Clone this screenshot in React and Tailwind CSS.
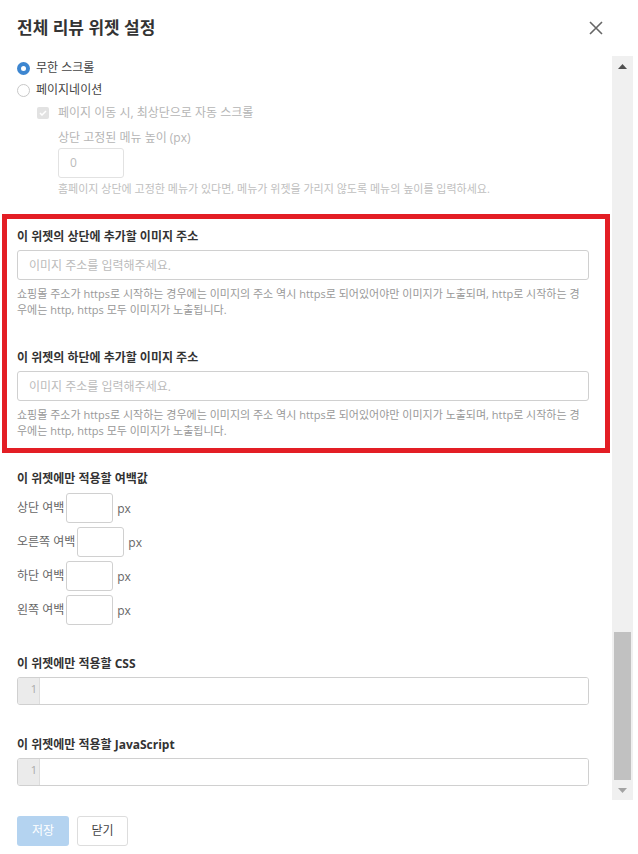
import React from 'react';

const font = { fontFamily: '"Open Sans", "Noto Sans CJK KR", sans-serif' };

const HELP_IMG =
  '쇼핑몰 주소가 https로 시작하는 경우에는 이미지의 주소 역시 https로 되어있어야만 이미지가 노출되며, http로 시작하는 경우에는 http, https 모두 이미지가 노출됩니다.';

const Radio = ({ checked, label }) => (
  <div className="flex h-[22px] items-center">
    {checked ? (
      <span className="flex h-[13px] w-[13px] items-center justify-center rounded-full bg-[#3d86d0]">
        <span className="h-[5px] w-[5px] rounded-full bg-white" />
      </span>
    ) : (
      <span className="h-[13px] w-[13px] rounded-full border border-[#c8c8c8] bg-white" />
    )}
    <span className="ml-[6px] text-[12px] text-[#444]">{label}</span>
  </div>
);

const ImageField = ({ title, className = '' }) => (
  <div className={className}>
    <div className="h-[18px] text-[12px] font-bold leading-[18px] text-[#333]">{title}</div>
    <input
      className="mt-[4px] h-[30px] w-full rounded-[3px] border border-[#d0d0d0] px-[11px] text-[12px] text-[#333] outline-none placeholder:text-[#bbb]"
      placeholder="이미지 주소를 입력해주세요."
    />
    <p className="mt-[6px] text-[11px] leading-[16px] text-[#999]">{HELP_IMG}</p>
  </div>
);

const MarginRow = ({ label }) => (
  <div className="flex h-[30px] items-center">
    <span className="text-[12px] text-[#666]">{label}</span>
    <input className="ml-[2px] h-[30px] w-[47px] rounded-[3px] border border-[#d0d0d0] outline-none" />
    <span className="ml-[4px] mt-[2px] text-[12px] text-[#666]">px</span>
  </div>
);

const CodeBox = () => (
  <div className="flex h-[28px] overflow-hidden rounded-[3px] border border-[#d0d0d0]">
    <div className="flex w-[22px] justify-end border-r border-[#ddd] bg-[#ebebeb] pr-[2px] pt-[5px] text-[11px] leading-[12px] text-[#aaa]">
      1
    </div>
    <div className="flex-1 bg-white" />
  </div>
);

const ScrollBar = () => (
  <div className="flex w-[21px] flex-col bg-[#f0f0f0]">
    <div className="flex h-[20px] items-center justify-center">
      <svg width="9" height="5" viewBox="0 0 9 5">
        <path d="M0 5 L4.5 0 L9 5 Z" fill="#505050" />
      </svg>
    </div>
    <div className="flex-1" />
    <div className="mx-[2px] h-[148px] bg-[#c1c1c1]" />
    <div className="flex h-[20px] items-center justify-center">
      <svg width="9" height="5" viewBox="0 0 9 5">
        <path d="M0 0 L9 0 L4.5 5 Z" fill="#a3a3a3" />
      </svg>
    </div>
  </div>
);

export default function App() {
  return (
    <div className="flex h-[854px] w-[638px] flex-col bg-white" style={font}>
      {/* header */}
      <div className="flex h-[56px] shrink-0 items-center justify-between pl-[17px] pr-[35px]">
        <h2 className="text-[17px] font-bold text-[#333]">전체 리뷰 위젯 설정</h2>
        <svg width="14" height="14" viewBox="0 0 14 14">
          <path d="M1 1 L13 13 M13 1 L1 13" stroke="#666" strokeWidth="1.6" />
        </svg>
      </div>

      {/* scrolling body */}
      <div className="flex h-[744px] shrink-0 pr-[5px]">
        <div className="flex-1 overflow-hidden pl-[17px] pr-[23px] pt-[1px]">
          <Radio checked label="무한 스크롤" />
          <Radio label="페이지네이션" />

          <div className="ml-[20px] mt-[1px] flex h-[22px] items-center">
            <span className="flex h-[12px] w-[12px] items-center justify-center rounded-[2px] bg-[#e2e2e2]">
              <svg width="8" height="6" viewBox="0 0 8 6">
                <path d="M1 3 L3 5 L7 1" stroke="#fff" strokeWidth="1.5" fill="none" />
              </svg>
            </span>
            <span className="ml-[9px] text-[12px] text-[#b5b5b5]">페이지 이동 시, 최상단으로 자동 스크롤</span>
          </div>

          <div className="ml-[41px]">
            <div className="mt-[5px] h-[18px] text-[12px] leading-[18px] text-[#b5b5b5]">상단 고정된 메뉴 높이 (px)</div>
            <div className="mt-[1px] flex h-[30px] w-[66px] items-center rounded-[3px] border border-[#e2e2e2] px-[11px] text-[12px] text-[#bbb]">
              0
            </div>
            <p className="mt-[3px] text-[11px] leading-[16px] text-[#c0c0c0]">
              홈페이지 상단에 고정한 메뉴가 있다면, 메뉴가 위젯을 가리지 않도록 메뉴의 높이를 입력하세요.
            </p>
          </div>

          {/* highlighted section */}
          <div className="-ml-[15px] -mr-[21px] mt-[17px] border-[5px] border-[#e31e25] pb-[9px] pl-[10px] pr-[16px] pt-[9px]">
            <ImageField title="이 위젯의 상단에 추가할 이미지 주소" />
            <ImageField title="이 위젯의 하단에 추가할 이미지 주소" className="mt-[31px]" />
          </div>

          {/* margins */}
          <div className="mt-[17px] h-[18px] text-[12px] font-bold leading-[18px] text-[#333]">이 위젯에만 적용할 여백값</div>
          <div className="mt-[5px] flex flex-col gap-[4px]">
            <MarginRow label="상단 여백" />
            <MarginRow label="오른쪽 여백" />
            <MarginRow label="하단 여백" />
            <MarginRow label="왼쪽 여백" />
          </div>

          <div className="mt-[30px] h-[18px] text-[12px] font-bold leading-[18px] text-[#333]">이 위젯에만 적용할 CSS</div>
          <div className="mt-[4px]">
            <CodeBox />
          </div>

          <div className="mt-[31px] h-[18px] text-[12px] font-bold leading-[18px] text-[#333]">이 위젯에만 적용할 JavaScript</div>
          <div className="mt-[4px]">
            <CodeBox />
          </div>
        </div>
        <ScrollBar />
      </div>

      {/* footer */}
      <div className="flex gap-[8px] pl-[17px] pt-[16px]">
        <button className="h-[30px] w-[52px] rounded-[3px] bg-[#b4d3f0] text-[12px] text-white">저장</button>
        <button className="h-[30px] w-[51px] rounded-[3px] border border-[#ddd] bg-white text-[12px] text-[#444]">닫기</button>
      </div>
    </div>
  );
}
